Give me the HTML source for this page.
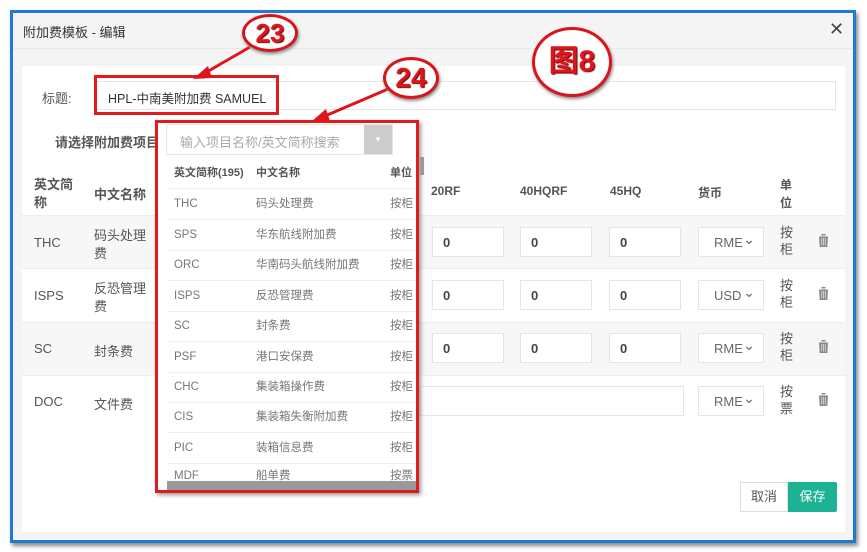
<!DOCTYPE html>
<html><head><meta charset="utf-8"><style>
*{box-sizing:border-box;margin:0;padding:0}
body{width:867px;height:552px;background:#fff;font-family:"Liberation Sans","Noto Sans CJK SC",sans-serif;font-size:12px;color:#555;position:relative;overflow:hidden}
.a{position:absolute}
.frame{left:10px;top:10px;width:846px;height:533px;border:3px solid #1f7ad6;background:#f4f4f4;box-shadow:2px 3px 4px #888}
.card{left:22px;top:66px;width:823px;height:466px;background:#fff}
.inp{background:#fff;border:1px solid #e5e5e5}
.t{position:absolute;white-space:nowrap}
.b{font-weight:bold;color:#555}
.sel{border:1px solid #e5e5e5;background:#fff;width:66px;height:30px;color:#666;font-size:13px;padding:7px 0 0 15px}
.sel:after{content:"⌄";position:absolute;right:8px;top:3px;font-size:14px}
.num{width:72px;height:30px;font-size:13px;font-weight:bold;color:#444;padding:7px 0 0 10px}
.dd{left:155px;top:120px;width:264px;height:373px;border:3px solid #e01b1b;background:#fff;box-shadow:2px 2px 4px #999}
.row{position:absolute;left:10px;width:248px;height:31px;border-bottom:1px solid #eee;color:#777;font-size:11.5px;line-height:30px}
.row span{position:absolute;top:0}
.circ{border:3px solid #d8151b;border-radius:50%;background:#fff;box-shadow:1px 2px 3px #888;color:#e0141a;font-weight:bold;text-align:center;text-shadow:1px 1px 1px #600}
</style></head><body>
<div class="a frame"></div>
<div class="t" style="left:23px;top:22px;font-size:13px;color:#333">附加费模板 - 编辑</div>
<div class="t" style="left:829px;top:19px;font-size:18px;color:#444">✕</div>
<div class="a" style="left:13px;top:48px;width:840px;height:1px;background:#e8e8e8"></div>
<div class="a card"></div>
<div class="t" style="left:42px;top:88px;font-size:13px;color:#555">标题:</div>
<div class="a inp" style="left:96px;top:81px;width:740px;height:29px"></div>
<div class="a" style="left:94px;top:75px;width:185px;height:40px;border:3px solid #e01b1b"></div>
<div class="t" style="left:108px;top:88px;font-size:12.5px;color:#333">HPL-中南美附加费 SAMUEL</div>
<div class="t b" style="left:55px;top:132px;font-size:13px">请选择附加费项目:</div>
<div class="t b" style="left:34px;top:176px;line-height:18px;font-size:13px">英文简<br>称</div>
<div class="t b" style="left:94px;top:184px;font-size:13px">中文名称</div>
<div class="t b" style="left:431px;top:184px">20RF</div>
<div class="t b" style="left:520px;top:184px">40HQRF</div>
<div class="t b" style="left:610px;top:184px">45HQ</div>
<div class="t b" style="left:698px;top:184px">货币</div>
<div class="t b" style="left:780px;top:176px;line-height:18px">单<br>位</div>
<div class="a" style="left:22px;top:215px;width:823px;height:53px;background:#f7f7f7;border-top:1px solid #eee"></div>
<div class="a" style="left:22px;top:268px;width:823px;height:54px;border-top:1px solid #eee"></div>
<div class="a" style="left:22px;top:322px;width:823px;height:53px;background:#f7f7f7;border-top:1px solid #eee"></div>
<div class="a" style="left:22px;top:375px;width:823px;height:53px;border-top:1px solid #eee"></div>
<div class="t" style="left:34px;top:235px;font-size:13px">THC</div>
<div class="t" style="left:94px;top:227px;font-size:13px;line-height:18px">码头处理<br>费</div>
<div class="t" style="left:34px;top:288px;font-size:13px">ISPS</div>
<div class="t" style="left:94px;top:280px;font-size:13px;line-height:18px">反恐管理<br>费</div>
<div class="t" style="left:34px;top:341px;font-size:13px">SC</div>
<div class="t" style="left:94px;top:341px;font-size:13px">封条费</div>
<div class="t" style="left:34px;top:394px;font-size:13px">DOC</div>
<div class="t" style="left:94px;top:394px;font-size:13px">文件费</div>
<div class="a inp num" style="left:432px;top:227px">0</div>
<div class="a inp num" style="left:520px;top:227px">0</div>
<div class="a inp num" style="left:609px;top:227px">0</div>
<div class="a sel" style="left:698px;top:227px">RME</div>
<div class="a inp num" style="left:432px;top:280px">0</div>
<div class="a inp num" style="left:520px;top:280px">0</div>
<div class="a inp num" style="left:609px;top:280px">0</div>
<div class="a sel" style="left:698px;top:280px">USD</div>
<div class="a inp num" style="left:432px;top:333px">0</div>
<div class="a inp num" style="left:520px;top:333px">0</div>
<div class="a inp num" style="left:609px;top:333px">0</div>
<div class="a sel" style="left:698px;top:333px">RME</div>
<div class="a inp" style="left:420px;top:386px;width:264px;height:30px"></div>
<div class="a sel" style="left:698px;top:386px">RME</div>
<div class="t" style="left:780px;top:224px;line-height:17px;font-size:13px;color:#555">按<br>柜</div>
<div class="t" style="left:780px;top:277px;line-height:17px;font-size:13px;color:#555">按<br>柜</div>
<div class="t" style="left:780px;top:330px;line-height:17px;font-size:13px;color:#555">按<br>柜</div>
<div class="t" style="left:780px;top:383px;line-height:17px;font-size:13px;color:#555">按<br>票</div>
<svg class="a" style="left:817px;top:233px" width="13" height="15"><path d="M1 2.5h11M4.5 2.5V1h4v1.5M2 3.5h9l-.7 10.5H2.7z" fill="#888"/><path d="M4.8 5v7.5M6.5 5v7.5M8.2 5v7.5" stroke="#fff" stroke-width=".6"/></svg>
<svg class="a" style="left:817px;top:286px" width="13" height="15"><path d="M1 2.5h11M4.5 2.5V1h4v1.5M2 3.5h9l-.7 10.5H2.7z" fill="#888"/><path d="M4.8 5v7.5M6.5 5v7.5M8.2 5v7.5" stroke="#fff" stroke-width=".6"/></svg>
<svg class="a" style="left:817px;top:339px" width="13" height="15"><path d="M1 2.5h11M4.5 2.5V1h4v1.5M2 3.5h9l-.7 10.5H2.7z" fill="#888"/><path d="M4.8 5v7.5M6.5 5v7.5M8.2 5v7.5" stroke="#fff" stroke-width=".6"/></svg>
<svg class="a" style="left:817px;top:392px" width="13" height="15"><path d="M1 2.5h11M4.5 2.5V1h4v1.5M2 3.5h9l-.7 10.5H2.7z" fill="#888"/><path d="M4.8 5v7.5M6.5 5v7.5M8.2 5v7.5" stroke="#fff" stroke-width=".6"/></svg>
<div class="a" style="left:740px;top:482px;width:48px;height:30px;border:1px solid #ddd;background:#fff;color:#555;font-size:13px;text-align:center;line-height:28px">取消</div>
<div class="a" style="left:788px;top:482px;width:49px;height:30px;background:#1bb394;color:#fff;font-size:13px;text-align:center;line-height:30px;border-radius:0 2px 2px 0">保存</div>
<div class="a dd">
 <div class="a" style="left:8px;top:1px;width:227px;height:31px;border:1px solid #e5e5e5;background:#fff;color:#aaa;font-size:13px;padding:7px 0 0 13px">输入项目名称/英文简称搜索</div>
 <div class="a" style="left:206px;top:2px;width:28px;height:29px;background:#ccc;color:#fff;text-align:center;font-size:9px;line-height:28px">▾</div>
 <div class="a" style="left:262px;top:34px;width:4px;height:18px;background:#999"></div>
 <div class="row" style="top:35px;color:#555;font-weight:bold;font-size:11px"><span style="left:6px">英文简称(195)</span><span style="left:88px">中文名称</span><span style="left:222px">单位</span></div>
 <div class="row" style="top:66px"><span style="left:6px">THC</span><span style="left:88px">码头处理费</span><span style="left:222px">按柜</span></div>
 <div class="row" style="top:97px"><span style="left:6px">SPS</span><span style="left:88px">华东航线附加费</span><span style="left:222px">按柜</span></div>
 <div class="row" style="top:127px"><span style="left:6px">ORC</span><span style="left:88px">华南码头航线附加费</span><span style="left:222px">按柜</span></div>
 <div class="row" style="top:158px"><span style="left:6px">ISPS</span><span style="left:88px">反恐管理费</span><span style="left:222px">按柜</span></div>
 <div class="row" style="top:188px"><span style="left:6px">SC</span><span style="left:88px">封条费</span><span style="left:222px">按柜</span></div>
 <div class="row" style="top:219px"><span style="left:6px">PSF</span><span style="left:88px">港口安保费</span><span style="left:222px">按柜</span></div>
 <div class="row" style="top:249px"><span style="left:6px">CHC</span><span style="left:88px">集装箱操作费</span><span style="left:222px">按柜</span></div>
 <div class="row" style="top:279px"><span style="left:6px">CIS</span><span style="left:88px">集装箱失衡附加费</span><span style="left:222px">按柜</span></div>
 <div class="row" style="top:310px"><span style="left:6px">PIC</span><span style="left:88px">装箱信息费</span><span style="left:222px">按柜</span></div>
 <div class="row" style="top:340px;border:none;height:18px;overflow:hidden"><span style="left:6px;top:-2px">MDF</span><span style="left:88px;top:-2px">船单费</span><span style="left:222px;top:-2px">按票</span></div>
 <div class="a" style="left:9px;top:358px;width:249px;height:9px;background:#999"></div>
</div>
<svg class="a" style="left:0;top:0" width="867" height="552">
 <g stroke="#e0141a" stroke-width="3" fill="#e0141a">
  <line x1="250" y1="47" x2="205" y2="73"/><polygon points="193,79 208,66 212,78" stroke="none"/>
  <line x1="395" y1="86" x2="325" y2="116"/><polygon points="312,121 326,109 330,121" stroke="none"/>
 </g>
</svg>
<div class="a circ" style="left:242px;top:14px;width:56px;height:38px;font-size:26px;line-height:32px">23</div>
<div class="a circ" style="left:383px;top:57px;width:56px;height:42px;font-size:28px;line-height:36px">24</div>
<div class="a circ" style="left:532px;top:27px;width:80px;height:70px;font-size:30px;line-height:64px">图8</div>
</body></html>
